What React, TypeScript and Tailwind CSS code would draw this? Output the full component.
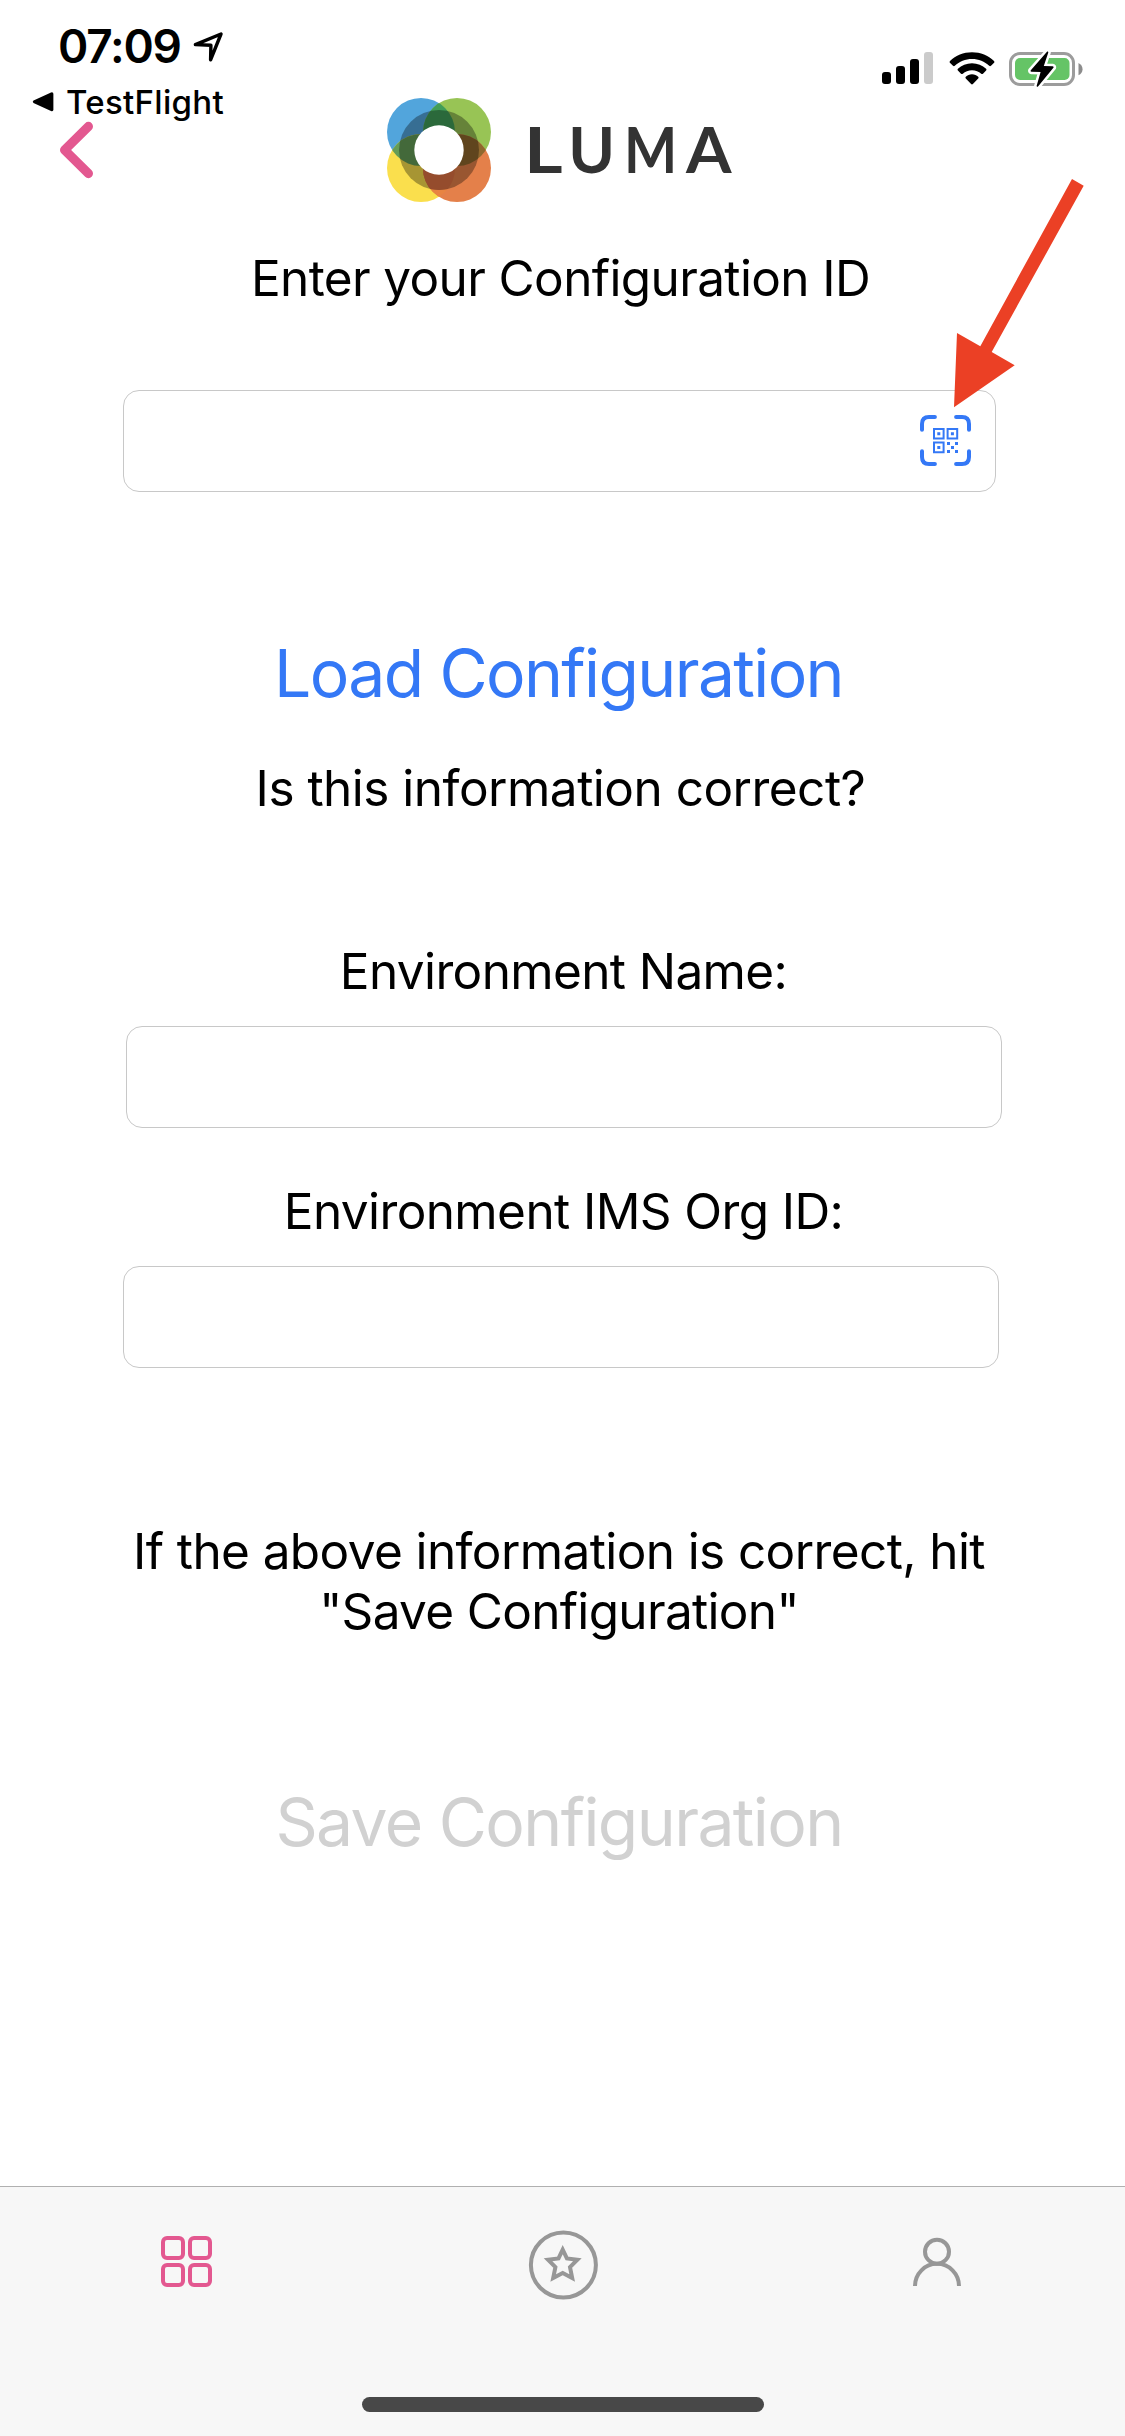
import React from "react";

function LocationArrow() {
  return (
    <svg width="32" height="34" viewBox="0 0 32 34" fill="none" className="mt-[14px] ml-[11px]">
      <path d="M3.4 12.6 L29 2 L18.6 27.8 L18.9 13.2 Z" stroke="#000" strokeWidth="3.4" strokeLinejoin="round" />
    </svg>
  );
}

function SignalBars() {
  return (
    <div className="flex h-8 items-end gap-[5px]">
      <div className="h-3 w-[9px] rounded-[3px] bg-black" />
      <div className="h-[18px] w-[9px] rounded-[3px] bg-black" />
      <div className="h-[25px] w-[9px] rounded-[3px] bg-black" />
      <div className="h-8 w-[9px] rounded-[3px] bg-[#cbcbcb]" />
    </div>
  );
}

function Wifi() {
  return (
    <svg width="46" height="34" viewBox="0 0 46 34">
      <path d="M23 0.2 C31.6 0.2 39.2 3.5 45 8.9 Q45.9 9.8 45.1 10.7 L42 13.8 Q41.1 14.6 40.2 13.8 C35.6 9.6 29.6 7.1 23 7.1 C16.4 7.1 10.4 9.6 5.8 13.8 Q4.9 14.6 4 13.8 L0.9 10.7 Q0.1 9.8 1 8.9 C6.8 3.5 14.4 0.2 23 0.2 Z" />
      <path d="M23 11.3 C28.5 11.3 33.4 13.4 37.1 16.8 Q38 17.7 37.1 18.6 L34 21.7 Q33.1 22.5 32.2 21.7 C29.8 19.5 26.6 18.2 23 18.2 C19.4 18.2 16.2 19.5 13.8 21.7 Q12.9 22.5 12 21.7 L8.9 18.6 Q8 17.7 8.9 16.8 C12.6 13.4 17.5 11.3 23 11.3 Z" />
      <path d="M23 22.3 C25.6 22.3 27.6 23.2 29.2 24.7 Q30.1 25.6 29.2 26.5 L23.9 32 Q23 32.9 22.1 32 L16.8 26.5 Q15.9 25.6 16.8 24.7 C18.4 23.2 20.4 22.3 23 22.3 Z" />
    </svg>
  );
}

function Battery() {
  return (
    <svg width="75" height="38" viewBox="0 0 75 38">
      <rect x="1.5" y="3.5" width="63" height="31" rx="9.5" fill="none" stroke="#9c9c9c" strokeWidth="3" />
      <rect x="6" y="8" width="54.5" height="22" rx="5" fill="#65c466" />
      <path d="M69.5 13 Q73.5 15 73.5 19.2 Q73.5 23.4 69.5 25.2 Z" fill="#8c8c8c" />
      <path d="M38.2 1.6 L21.6 20.4 Q21.3 21.6 22.6 21.8 L31.6 22 L27.6 36 Q27.8 37.2 29 36.6 L44.6 17.6 Q45 16.4 43.6 16.2 L34.8 16 L39.3 2.4 Q39.2 1 38.2 1.6 Z" fill="#000" stroke="#fff" strokeWidth="5" strokeLinejoin="round" paintOrder="stroke" />
    </svg>
  );
}

function LumaMark() {
  return (
    <svg width="104" height="104" viewBox="0 0 104 104">
      <defs>
        <clipPath id="upperRight"><circle cx="70" cy="34" r="34" /></clipPath>
        <clipPath id="lowerLeft"><circle cx="34" cy="70" r="34" /></clipPath>
        <clipPath id="core"><circle cx="52" cy="52" r="40" /></clipPath>
      </defs>
      <circle cx="34" cy="34" r="34" fill="#52a5dc" />
      <circle cx="70" cy="34" r="34" fill="#98c455" />
      <circle cx="34" cy="70" r="34" fill="#fadf4d" />
      <circle cx="70" cy="70" r="34" fill="#e4804a" />
      <circle cx="34" cy="34" r="34" fill="#419d58" clipPath="url(#upperRight)" />
      <circle cx="34" cy="34" r="34" fill="#659d57" clipPath="url(#lowerLeft)" />
      <circle cx="70" cy="70" r="34" fill="#8f682e" clipPath="url(#upperRight)" />
      <circle cx="70" cy="70" r="34" fill="#e88442" clipPath="url(#lowerLeft)" />
      <circle cx="52" cy="52" r="40" fill="#000" fillOpacity="0.33" />
      <g clipPath="url(#core)">
        <circle cx="70" cy="70" r="34" fill="#954c2d" clipPath="url(#lowerLeft)" />
      </g>
      <circle cx="52" cy="52" r="24.7" fill="#fff" />
    </svg>
  );
}

function QrScan() {
  return (
    <svg width="51" height="51" viewBox="0 0 51 51" fill="none" stroke="#3478f6" className="-mt-px">
      <path d="M2 14.7 V9 Q2 2 9 2 H14.9 M36.1 2 H42 Q49 2 49 9 V14.7 M49 36.3 V42 Q49 49 42 49 H36.1 M14.9 49 H9 Q2 49 2 42 V36.3" strokeWidth="4" strokeLinecap="round" />
      <path d="M14 14 H23.6 V23.6 H14 Z M27.6 14 H37.2 V23.6 H27.6 Z M14 27.6 H23.6 V37.2 H14 Z" strokeWidth="2" />
      <path d="M17.3 17.3h3v3h-3z M30.9 17.3h3v3h-3z M17.3 30.9h3v3h-3z M27 27h3v3h-3z M35 27h3v3h-3z M31 31h3v3h-3z M27 35h3v3h-3z M35 35h3v3h-3z" fill="#3478f6" stroke="none" />
    </svg>
  );
}

function PointerArrow() {
  return (
    <svg width="132" height="230" viewBox="953 178 132 230" className="absolute top-[178px] left-[953px]">
      <path d="M1072 179 L1083.7 185.7 L991.7 352 L1014.7 365.3 L954 407.3 L957 333 L980.3 346.2 Z" fill="#eb4025" />
    </svg>
  );
}

function StatusBar() {
  return (
    <header className="flex h-[122px] justify-between">
      <div className="flex flex-col pt-[18px] pl-8">
        <div className="flex h-14 pl-[26px]">
          <span className="text-[46px] leading-[56px] font-semibold tracking-[-1.2px]">07:09</span>
          <LocationArrow />
        </div>
        <div className="mt-2 flex h-10 items-center">
          <svg width="22" height="22" viewBox="0 0 22 22">
            <path d="M1.5 9.6 L19 1.4 Q21.4 0.8 21.4 3 V18.5 Q21.4 20.8 19 20 L1.5 12 Q0 10.8 1.5 9.6 Z" />
          </svg>
          <span className="ml-3 text-[33px] leading-10 font-medium tracking-[0.3px]">TestFlight</span>
        </div>
      </div>
      <div className="mt-[50px] flex h-[38px] items-end pr-[41px]">
        <div className="mb-1"><SignalBars /></div>
        <div className="mr-[14px] mb-[2px] ml-4"><Wifi /></div>
        <Battery />
      </div>
    </header>
  );
}

function NavBar() {
  return (
    <nav className="-mt-6 flex h-[104px] pl-[59px]">
      <svg width="36" height="58" viewBox="0 0 36 58" fill="none" className="mt-[23px]">
        <path d="M29.4 5.4 L5.6 29 L29.4 52.6" stroke="#e35890" strokeWidth="9.2" strokeLinecap="round" strokeLinejoin="round" />
      </svg>
      <div className="ml-[292px] flex">
        <LumaMark />
        <h1 className="ml-[33px] pt-[11px] font-['Lato',sans-serif] text-[63px] leading-[80px] font-bold whitespace-nowrap text-[#333333]">
          <span className="inline-block origin-left scale-x-[1.18]">L</span>
          <span className="ml-[11.6px] inline-block">U</span>
          <span className="ml-[8.4px] inline-block origin-left scale-x-[0.894]">M</span>
          <span className="ml-[3px] inline-block origin-left scale-x-[1.04]">A</span>
        </h1>
      </div>
    </nav>
  );
}

function TabBar() {
  return (
    <footer className="mt-auto flex h-[250px] flex-col border-t border-[#b0b0b0] bg-[#f7f7f7]">
      <div className="flex h-[180px] pt-[42px]">
        <div className="mt-[7px] ml-[161px] grid h-[51px] w-[51px] grid-cols-2 gap-[3px]">
          <div className="rounded-[6px] border-4 border-[#e35890]" />
          <div className="rounded-[6px] border-4 border-[#e35890]" />
          <div className="rounded-[6px] border-4 border-[#e35890]" />
          <div className="rounded-[6px] border-4 border-[#e35890]" />
        </div>
        <svg width="72" height="72" viewBox="0 0 72 72" fill="none" stroke="#979797" strokeWidth="4" className="ml-[316px]">
          <circle cx="35.4" cy="36" r="32.5" />
          <path d="M34.7 20.6 L38.9 29.4 L49.4 30.7 L42 38.2 L44.2 49.1 L34.7 44 L25.2 49.1 L27.4 38.2 L20 30.7 L30.5 29.4 Z" />
        </svg>
        <svg width="50" height="50" viewBox="0 0 50 50" fill="none" stroke="#979797" strokeWidth="4" className="mt-[8px] ml-[312px]">
          <circle cx="25" cy="14.7" r="12" />
          <path d="M3 49 A22 22.2 0 0 1 47 49" />
        </svg>
      </div>
      <div className="mx-auto mt-[30px] h-[15px] w-[402px] rounded-full bg-[#484848]" />
    </footer>
  );
}

export default function App() {
  return (
    <div className="relative flex h-[2436px] w-[1125px] flex-col overflow-hidden bg-white font-['Inter',sans-serif] text-black">
      <StatusBar />
      <NavBar />
      <main className="flex flex-col text-center text-[49.5px] leading-[60px]">
        <p className="mt-[46px] pr-[4px] tracking-[-0.63px]">Enter your Configuration ID</p>
        <div className="mt-[82px] ml-[123px] flex h-[102px] w-[873px] items-center justify-end rounded-2xl border border-[#c8c8c8] pr-6">
          <QrScan />
        </div>
        <button className="mt-[141px] pr-[8px] text-[66px] leading-[80px] tracking-[-1.63px] text-[#3478f6]">Load Configuration</button>
        <p className="mt-[45px] pr-1 tracking-[-0.51px]">Is this information correct?</p>
        <p className="mt-[123px] pl-[2px] tracking-[-0.62px]">Environment Name:</p>
        <div className="mt-[25px] ml-[126px] h-[102px] w-[876px] rounded-2xl border border-[#c8c8c8]" />
        <p className="mt-[53px] pl-[2px] tracking-[-0.6px]">Environment IMS Org ID:</p>
        <div className="mt-[25px] ml-[123px] h-[102px] w-[876px] rounded-2xl border border-[#c8c8c8]" />
        <p className="mt-[153px] pr-[7px] tracking-[-0.6px]">
          If the above information is correct, hit
          <br />
          <span className="tracking-[-0.68px]">"Save Configuration"</span>
        </p>
        <button className="mt-[141px] pr-[7px] text-[66px] leading-[80px] tracking-[-1.6px] text-[#d1d1d1]">Save Configuration</button>
      </main>
      <TabBar />
      <PointerArrow />
    </div>
  );
}
